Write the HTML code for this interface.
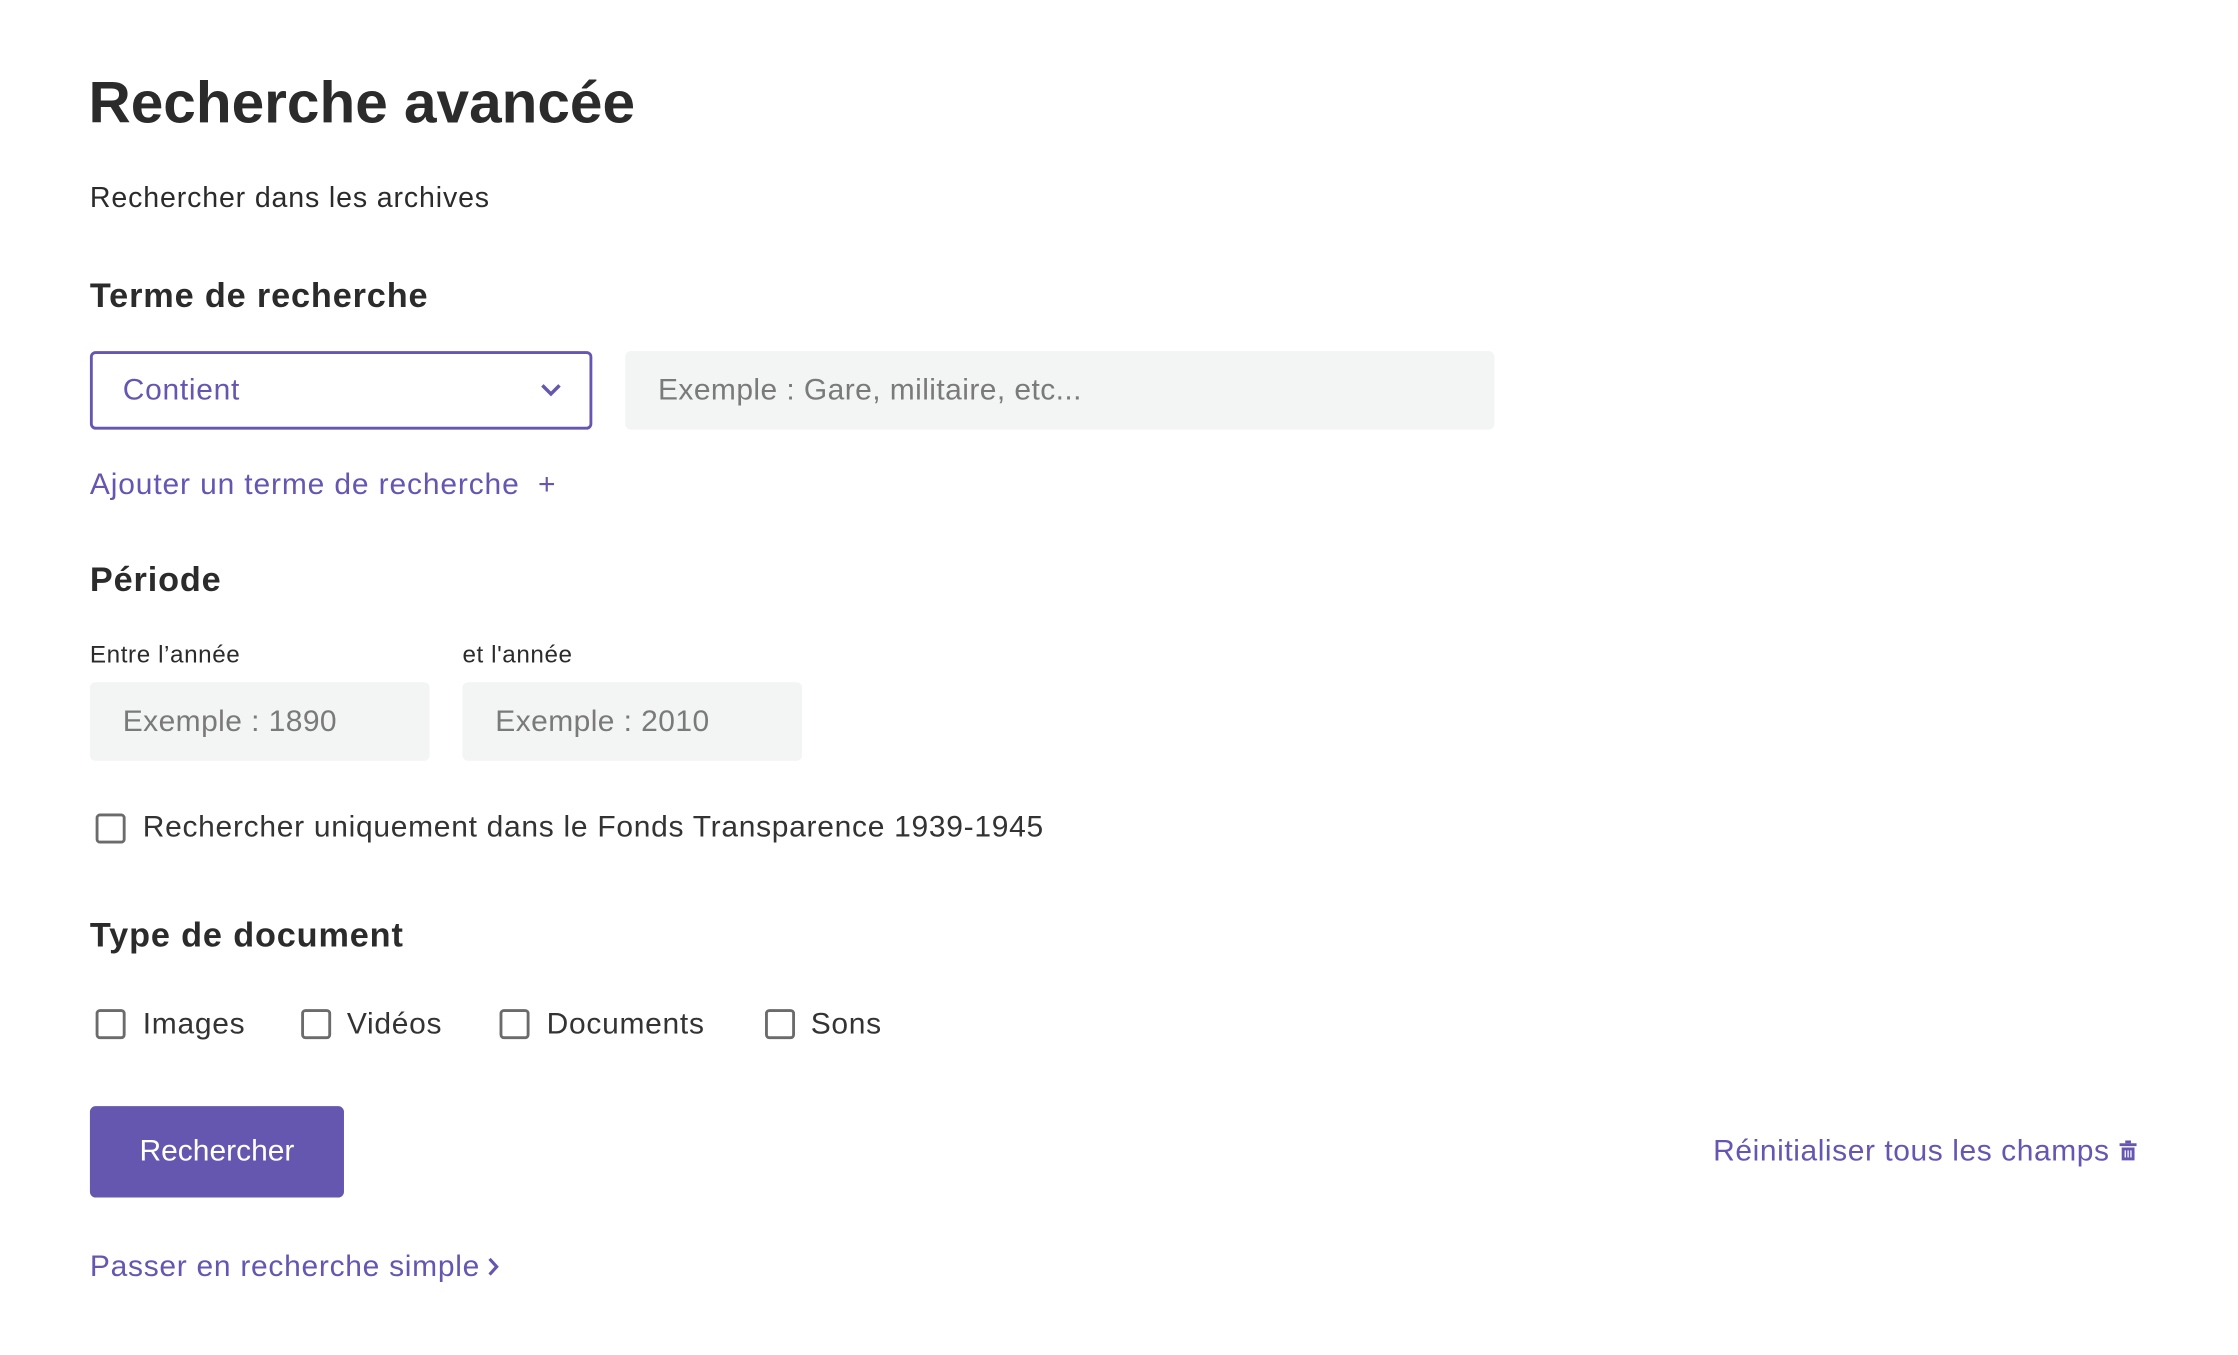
<!DOCTYPE html>
<html><head><meta charset="utf-8"><style>
html,body{margin:0;padding:0;background:#fff;width:2238px;height:1354px;overflow:hidden}
#w{position:absolute;left:0;top:0;width:1568px;height:949px;transform:scale(1.4273);transform-origin:0 0;font-family:"Liberation Sans",sans-serif;color:#2b2b2b}
.a{position:absolute;white-space:nowrap}
.h{font-weight:bold;font-size:24px;letter-spacing:0.6px}
.p{color:#6656b1}
.box{position:absolute;box-sizing:border-box;border-radius:4px}
.in{background:#f3f4f4;color:#7a7a7a;font-size:21px;line-height:55px;padding-left:23px;letter-spacing:0.3px}
.cb{position:absolute;width:17px;height:17px;border:2px solid #6b6b6b;border-radius:3px;box-sizing:content-box}
.t{font-size:21px;color:#333;letter-spacing:0.5px}
</style></head><body><div id="w">
<div class="a" style="left:62px;top:49px;font-size:41px;font-weight:bold;letter-spacing:0px">Recherche avancée</div>
<div class="a" style="left:63px;top:128px;font-size:20px;letter-spacing:0.6px">Rechercher dans les archives</div>
<div class="a h" style="left:63px;top:194px">Terme de recherche</div>
<div class="box" style="left:63px;top:246px;width:352px;height:55px;border:2px solid #6656b1;"></div>
<div class="a p" style="left:86px;top:262px;font-size:21px;letter-spacing:0.5px">Contient</div>
<svg class="a" style="left:378px;top:267px" width="16" height="12" viewBox="0 0 16 12"><path d="M2 3l6 6 6-6" fill="none" stroke="#6656b1" stroke-width="2.4"/></svg>
<div class="box in" style="left:438px;top:246px;width:609px;height:55px">Exemple : Gare, militaire, etc...</div>
<div class="a p" style="left:63px;top:328px;font-size:21px;letter-spacing:0.6px">Ajouter un terme de recherche&nbsp; +</div>
<div class="a h" style="left:63px;top:393px">Période</div>
<div class="a" style="left:63px;top:449px;font-size:17px;letter-spacing:0.4px">Entre l’année</div>
<div class="a" style="left:324px;top:449px;font-size:17px;letter-spacing:0.4px">et l'année</div>
<div class="box in" style="left:63px;top:478px;width:238px;height:55px">Exemple : 1890</div>
<div class="box in" style="left:324px;top:478px;width:238px;height:55px">Exemple : 2010</div>
<div class="cb" style="left:67px;top:570px"></div>
<div class="a t" style="left:100px;top:568px">Rechercher uniquement dans le Fonds Transparence 1939-1945</div>
<div class="a h" style="left:63px;top:642px">Type de document</div>
<div class="cb" style="left:67px;top:707px"></div><div class="a t" style="left:100px;top:706px">Images</div>
<div class="cb" style="left:211px;top:707px"></div><div class="a t" style="left:243px;top:706px">Vidéos</div>
<div class="cb" style="left:350px;top:707px"></div><div class="a t" style="left:383px;top:706px">Documents</div>
<div class="cb" style="left:536px;top:707px"></div><div class="a t" style="left:568px;top:706px">Sons</div>
<div class="box" style="left:63px;top:775px;width:178px;height:64px;background:#6556b0;color:#fff;font-size:21px;line-height:64px;text-align:center">Rechercher</div>
<div class="a p" style="right:90px;top:795px;font-size:21px;letter-spacing:0.4px">Réinitialiser tous les champs</div>
<svg class="a" style="left:1485px;top:799px" width="12" height="15" viewBox="0 0 12 15"><rect x="0" y="2" width="12" height="2" fill="#6656b1"/><rect x="4" y="0" width="4" height="2" fill="#6656b1"/><path d="M1.5 5h9v9h-9z" fill="#6656b1"/><path d="M4 7v5M6 7v5M8 7v5" stroke="#fff" stroke-width="0.9"/></svg>
<div class="a p" style="left:63px;top:876px;font-size:21px;letter-spacing:0.5px">Passer en recherche simple</div>
<svg class="a" style="left:340px;top:880px" width="12" height="15" viewBox="0 0 12 15"><path d="M3 2l5 5.5L3 13" fill="none" stroke="#6656b1" stroke-width="2.2"/></svg>
</div></body></html>
